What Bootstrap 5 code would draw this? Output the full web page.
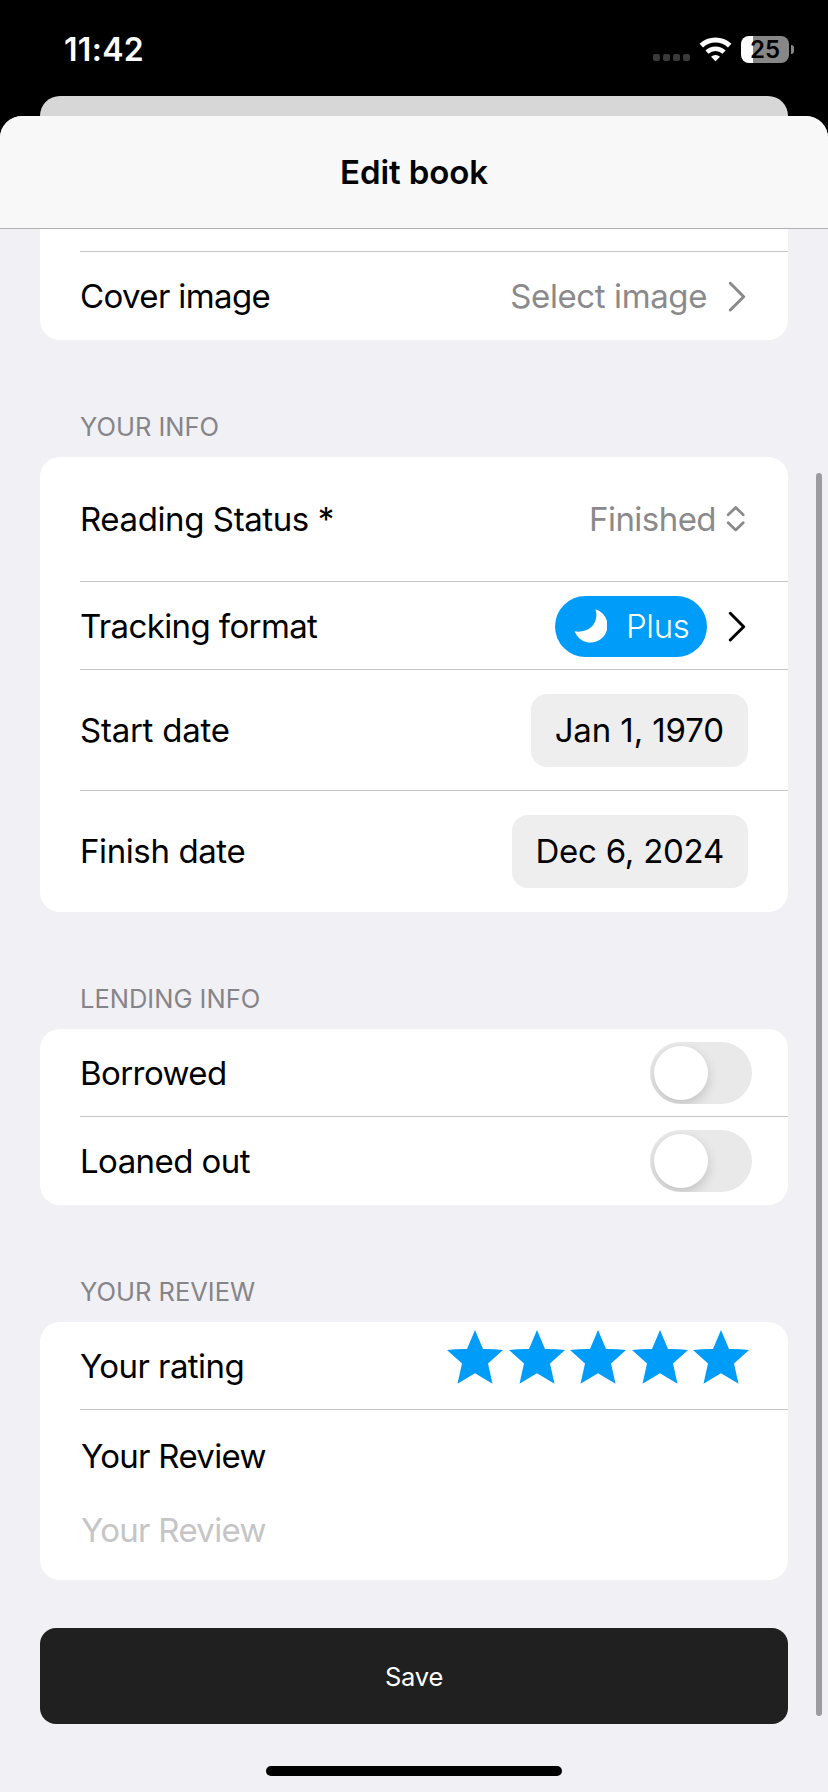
<!DOCTYPE html>
<html lang="en">
<head>
<meta charset="utf-8">
<meta name="viewport" content="width=device-width, initial-scale=1">
<title>Edit book</title>
<link href="https://cdn.jsdelivr.net/npm/bootstrap@5.3.0/dist/css/bootstrap.min.css" rel="stylesheet">
<script src="https://cdn.jsdelivr.net/npm/bootstrap@5.3.0/dist/js/bootstrap.bundle.min.js"></script>
<style>
  body { width: 828px; height: 1792px; margin: 0; overflow: hidden; background: #000; color: #000;
    font-family: Inter, "Liberation Sans", sans-serif; font-size: 33px; line-height: 44px; letter-spacing: -.55px; white-space: nowrap; }
  svg { display: block; flex: none; }

  /* status bar */
  .status { height: 96px; padding: 3px 34px 0 64px; color: #fff; }
  .clock { font-size: 32px; font-weight: 600; letter-spacing: .3px; line-height: 40px; }
  .battery { width: 48px; height: 27px; border-radius: 8px; background: linear-gradient(90deg, #fff 12px, #878787 12px);
    color: #000; font-size: 24px; font-weight: 600; line-height: 27px; letter-spacing: 0; }
  .nub { width: 3px; height: 9px; margin-left: 2px; border-radius: 0 4px 4px 0; background: #878787; }

  /* stacked sheets */
  .back-sheet { height: 20px; margin: 0 40px; background: #d7d7d7; border-radius: 20px 20px 0 0; }
  .sheet { height: 1676px; background: #f1f0f5; border-radius: 22px 22px 0 0; overflow: hidden; }
  .sheet-head { height: 113px; background: #f8f8f8; border-bottom: 1px solid #afafb1; font-weight: 600; letter-spacing: -.1px; }
  .form-area { padding: 0 40px; }

  /* grouped rows */
  .group { background: #fff; border-radius: 20px; }
  .group-cut { border-radius: 0 0 20px 20px; }
  .line { height: 1px; margin-left: 40px; background: #c6c6c8; }
  .item { padding: 0 40px; }
  .h-cut { height: 22px; }
  .h-87 { height: 87px; } .h-88 { height: 88px; }
  .h-120 { height: 120px; } .h-121 { height: 121px; } .h-124 { height: 124px; }
  .h-121 > :first-child { margin-bottom: 1px; }
  .group-title { height: 117px; padding: 72px 40px 0; color: #858489; font-size: 25.5px; line-height: 30px; letter-spacing: 0; }
  .muted { color: #8a8a8c; }

  .plus-pill { width: 152px; height: 61px; margin-top: 1px; padding-left: 19px; border-radius: 31px; background: #009cf9; color: #fff; gap: 19px; font-weight: 300; letter-spacing: -.35px; }
  .date-pill { height: 73px; padding: 0 24px; border-radius: 16px; background: #eee; line-height: 72px; }
  .toggle { width: 102px; height: 62px; margin-right: -4px; padding: 4px; border-radius: 31px; background: #e9e9e9; overflow: hidden; }
  .knob { width: 54px; height: 54px; border-radius: 50%; background: #fff; box-shadow: 0 5px 12px rgba(0,0,0,.17); }
  .stars { gap: 5.5px; padding-top: 8px; margin-right: -1px; }
  .review { height: 170px; padding: 24px 41px 0; letter-spacing: -.7px; }
  .placeholder-text { margin-top: 30px; color: #c5c5c7; }

  .save { height: 96px; margin-top: 48px; border-radius: 16px; background: #202020; color: #fff; font-size: 25.5px; letter-spacing: -.21px; padding: 3px 0 0; }
  .save:hover { background: #202020; color: #fff; }
  .home-bar { width: 296px; height: 10px; margin: 42px auto 0; border-radius: 5px; background: #000; }
  .scroll-thumb { position: absolute; left: 816px; top: 473px; width: 6px; height: 1243px; border-radius: 3px; background: #9c9ca0; }

  /* tracking adjustments */
  .ls-1 { letter-spacing: -.11px; } .ls-3 { letter-spacing: -.25px; } .ls-4 { letter-spacing: -.4px; }
  .ls-6 { letter-spacing: -.57px; } .ls-7 { letter-spacing: -.62px; }
</style>
</head>
<body>
<header class="status d-flex align-items-center justify-content-between">
  <span class="clock">11:42</span>
  <div class="d-flex align-items-center">
    <svg width="88" height="27" viewBox="653 36 88 27" aria-label="Wi-Fi">
      <g fill="#3a3a3a">
        <rect x="653" y="54" width="7" height="7" rx="2"/><rect x="663" y="54" width="7" height="7" rx="2"/>
        <rect x="673" y="54" width="7" height="7" rx="2"/><rect x="683" y="54" width="7" height="7" rx="2"/>
      </g>
      <g fill="none" stroke="#fff">
        <path d="M701.3 45.6A20.6 20.6 0 0 1 729.7 45.6" stroke-width="5"/>
        <path d="M707 52.1A12.4 12.4 0 0 1 724 52.1" stroke-width="4.6"/>
      </g>
      <path d="M715.5 61.2L711 56.7A6.5 6.5 0 0 1 720 56.7Z" fill="#fff"/>
    </svg>
    <div class="battery text-center">25</div>
    <div class="nub"></div>
  </div>
</header>
<div class="back-sheet"></div>
<main class="sheet">
  <div class="sheet-head d-flex align-items-center justify-content-center">Edit book</div>
  <div class="form-area">
    <section class="group group-cut">
      <div class="h-cut"></div>
      <div class="line"></div>
      <div class="item h-88 d-flex align-items-center justify-content-between">
        <span class="ls-7">Cover image</span>
        <span class="d-flex align-items-center muted">
          <span class="ls-4">Select image</span>
          <svg class="ms-3" width="25" height="32" viewBox="723 280 25 32"><path d="M730.3 283.3L743.7 296.7L730.3 310" fill="none" stroke="#8a8a8c" stroke-width="3" stroke-linecap="round" stroke-linejoin="round"/></svg>
        </span>
      </div>
    </section>

    <h2 class="group-title m-0 fw-normal">YOUR INFO</h2>
    <section class="group">
      <div class="item h-124 d-flex align-items-center justify-content-between">
        <span class="ls-4">Reading Status *</span>
        <span class="d-flex align-items-center muted">
          <span>Finished</span>
          <svg width="32" height="32" viewBox="716 503.5 32 32"><path d="M728.2 515.2L735.7 508L743.2 515.2M728.2 523.3L735.7 530.5L743.2 523.3" fill="none" stroke="#8a8a8c" stroke-width="2.8" stroke-linecap="round" stroke-linejoin="round"/></svg>
        </span>
      </div>
      <div class="line"></div>
      <div class="item h-87 d-flex align-items-center justify-content-between">
        <span class="ls-7">Tracking format</span>
        <span class="d-flex align-items-center">
          <span class="plus-pill d-flex align-items-center">
            <svg width="33" height="34" viewBox="0 0 33 34"><path d="M21.5 .3A17 17 0 1 1 .6 22.3C13 24.6 26 15.5 21.5 .3Z" fill="#fff"/></svg>
            <span>Plus</span>
          </span>
          <svg class="ms-3" width="25" height="32" viewBox="723 610 25 32"><path d="M730.3 613.3L743.7 626.7L730.3 640" fill="none" stroke="#000" stroke-width="3" stroke-linecap="round" stroke-linejoin="round"/></svg>
        </span>
      </div>
      <div class="line"></div>
      <div class="item h-120 d-flex align-items-center justify-content-between">
        <span class="ls-3">Start date</span>
        <span class="date-pill ls-1">Jan 1, 1970</span>
      </div>
      <div class="line"></div>
      <div class="item h-121 d-flex align-items-center justify-content-between">
        <span class="ls-4">Finish date</span>
        <span class="date-pill ls-3">Dec 6, 2024</span>
      </div>
    </section>

    <h2 class="group-title m-0 fw-normal">LENDING INFO</h2>
    <section class="group">
      <div class="item h-87 d-flex align-items-center justify-content-between">
        <span class="ls-6">Borrowed</span>
        <span class="toggle" role="switch" aria-checked="false"><span class="knob d-block"></span></span>
      </div>
      <div class="line"></div>
      <div class="item h-88 d-flex align-items-center justify-content-between">
        <span class="ls-6">Loaned out</span>
        <span class="toggle" role="switch" aria-checked="false"><span class="knob d-block"></span></span>
      </div>
    </section>

    <h2 class="group-title m-0 fw-normal">YOUR REVIEW</h2>
    <section class="group">
      <div class="item h-87 d-flex align-items-center justify-content-between">
        <span class="ls-6">Your rating</span>
        <span class="stars d-flex align-self-start">
          <svg width="56" height="54" viewBox="0 0 56 54"><path id="star" d="M28 0L36 19Q46 18.8 56 20L41 33.5L45.5 53.7L28 43.3L10.5 53.7L15 33.5L0 20Q10 18.8 20 19Z" fill="#009cf9"/></svg>
          <svg width="56" height="54" viewBox="0 0 56 54"><use href="#star"/></svg>
          <svg width="56" height="54" viewBox="0 0 56 54"><use href="#star"/></svg>
          <svg width="56" height="54" viewBox="0 0 56 54"><use href="#star"/></svg>
          <svg width="56" height="54" viewBox="0 0 56 54"><use href="#star"/></svg>
        </span>
      </div>
      <div class="line"></div>
      <div class="review">
        <div>Your Review</div>
        <div class="placeholder-text">Your Review</div>
      </div>
    </section>

    <button type="button" class="btn save border-0 w-100 d-flex align-items-center justify-content-center">Save</button>
    <div class="home-bar"></div>
  </div>
</main>
<div class="scroll-thumb"></div>
</body>
</html>
